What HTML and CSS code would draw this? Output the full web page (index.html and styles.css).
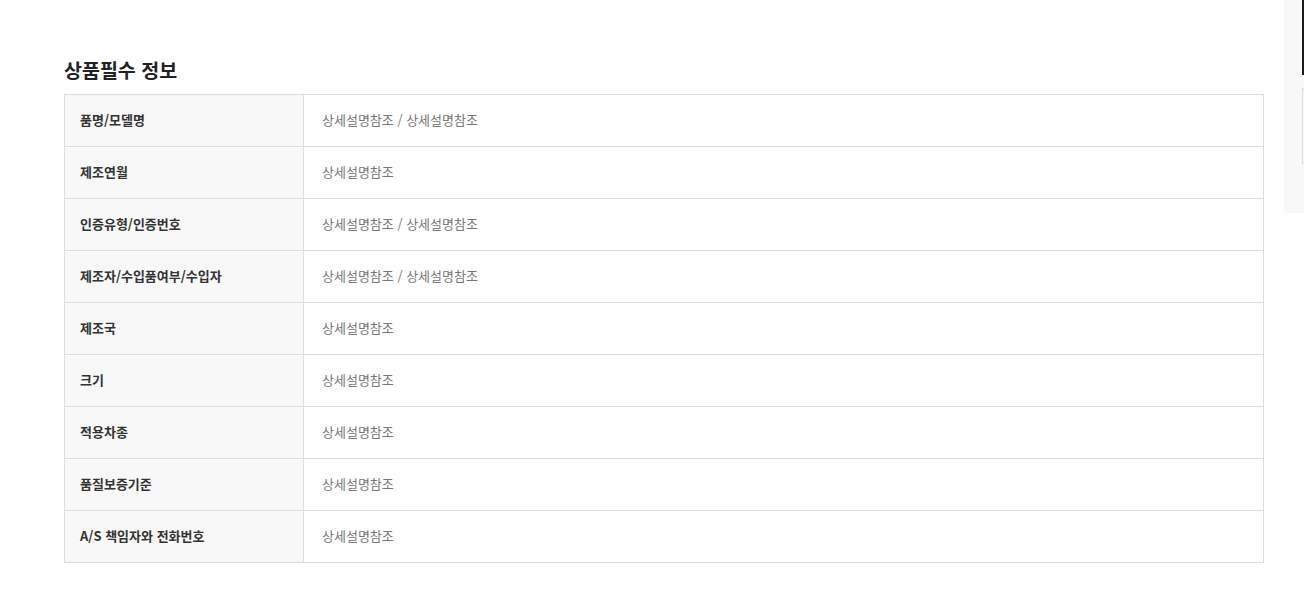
FILE: index.html
```html
<!DOCTYPE html>
<html lang="ko">
<head>
<meta charset="utf-8">
<link rel="stylesheet" href="styles.css">
</head>
<body>
<div class="page">
  <h2 class="title">상품필수 정보</h2>
  <table class="info">
    <tr><th>품명/모델명</th><td>상세설명참조 / 상세설명참조</td></tr>
    <tr><th>제조연월</th><td>상세설명참조</td></tr>
    <tr><th>인증유형/인증번호</th><td>상세설명참조 / 상세설명참조</td></tr>
    <tr><th>제조자/수입품여부/수입자</th><td>상세설명참조 / 상세설명참조</td></tr>
    <tr><th>제조국</th><td>상세설명참조</td></tr>
    <tr><th>크기</th><td>상세설명참조</td></tr>
    <tr><th>적용차종</th><td>상세설명참조</td></tr>
    <tr><th>품질보증기준</th><td>상세설명참조</td></tr>
    <tr><th>A/S 책임자와 전화번호</th><td>상세설명참조</td></tr>
  </table>
</div>
<aside class="side">
  <div class="side-thumb"></div>
  <div class="side-box"></div>
</aside>
</body>
</html>
```
FILE: styles.css
```css
html, body {
  margin: 0;
  padding: 0;
  background: #fff;
  overflow: hidden;
}
body {
  font-family: "Noto Sans CJK KR", "Noto Sans", sans-serif;
  color: #333;
}
.page {
  width: 1200px;
  margin-left: 64px;
  padding-top: 56px;
}
.title {
  margin: 0 0 11px 0;
  font-size: 19.5px;
  line-height: 27px;
  font-weight: 700;
  color: #222;
}
.info {
  width: 1200px;
  border-collapse: collapse;
  border: 1px solid #ddd;
  table-layout: fixed;
}
.info tr {
  height: 52px;
}
.info th,
.info td {
  border: 1px solid #ddd;
  font-size: 13px;
  line-height: 20px;
  padding: 0 0 2px 0;
  text-align: left;
  vertical-align: middle;
}
.info th {
  width: 239px;
  box-sizing: border-box;
  padding-left: 15px;
  background: #f8f8f8;
  font-weight: 700;
  color: #333;
}
.info td {
  padding-left: 18px;
  color: #777;
  font-weight: 400;
}
.side {
  position: absolute;
  top: 0;
  right: 0;
  width: 20px;
  height: 213px;
  background: #f8f8f8;
}
.side-thumb {
  position: absolute;
  left: 18px;
  top: 0;
  width: 2px;
  height: 75px;
  background: #1a1a1a;
}
.side-box {
  position: absolute;
  left: 18px;
  top: 88px;
  width: 10px;
  height: 74px;
  border: 1px solid #ddd;
  background: #f8f8f8;
}
```
